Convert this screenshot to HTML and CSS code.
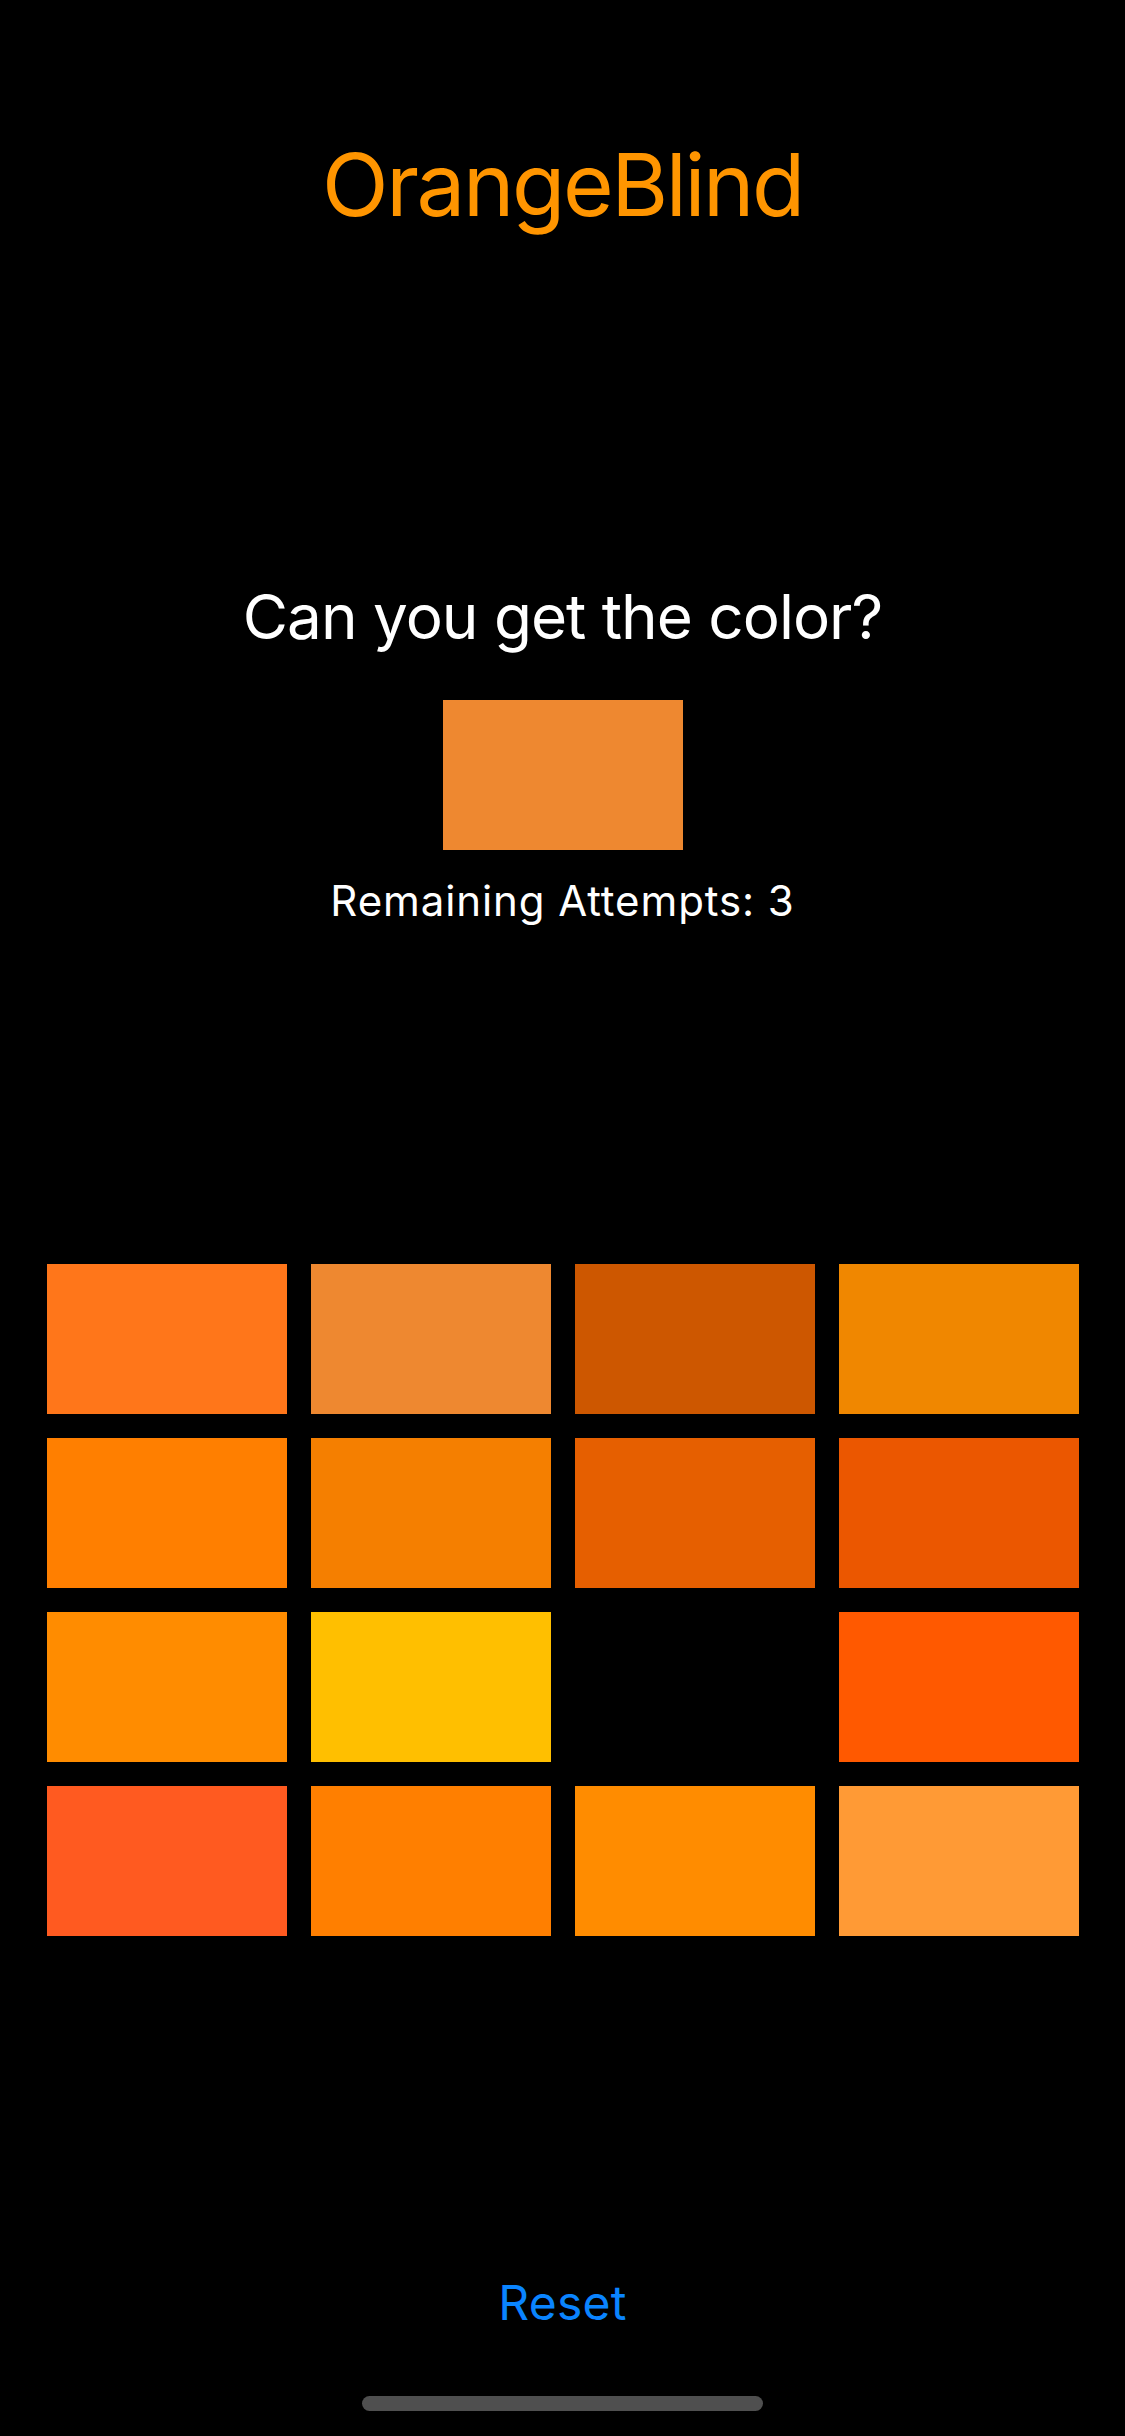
FILE: index.html
```html
<!DOCTYPE html>
<html lang="en">
<head>
<meta charset="utf-8">
<title>OrangeBlind</title>
<link rel="stylesheet" href="styles.css">
</head>
<body>
<main class="screen">
  <h1 class="title">OrangeBlind</h1>
  <p class="question">Can you get the color?</p>
  <div class="target"></div>
  <p class="attempts">Remaining Attempts: 3</p>
  <div class="grid">
    <div class="cell" style="background:#FF761A"></div>
    <div class="cell" style="background:#EE8830"></div>
    <div class="cell" style="background:#CD5700"></div>
    <div class="cell" style="background:#F08700"></div>
    <div class="cell" style="background:#FF7F00"></div>
    <div class="cell" style="background:#F57F00"></div>
    <div class="cell" style="background:#E65F00"></div>
    <div class="cell" style="background:#EB5700"></div>
    <div class="cell" style="background:#FF8C00"></div>
    <div class="cell" style="background:#FFBF00"></div>
    <div class="cell cell-empty"></div>
    <div class="cell" style="background:#FF5900"></div>
    <div class="cell" style="background:#FF5A20"></div>
    <div class="cell" style="background:#FF7F00"></div>
    <div class="cell" style="background:#FF8C00"></div>
    <div class="cell" style="background:#FF9A35"></div>
  </div>
  <button class="reset" type="button">Reset</button>
  <div class="home-indicator"></div>
</main>
</body>
</html>
```

FILE: styles.css
```css
html, body {
  margin: 0;
  padding: 0;
  background: #000;
}

body {
  font-family: Inter, "Noto Sans", "Liberation Sans", sans-serif;
  color: #fff;
}

.screen {
  width: 1125px;
  height: 2436px;
  display: flex;
  flex-direction: column;
  align-items: center;
  box-sizing: border-box;
  padding-top: 141px;
}

.title {
  margin: 0;
  font-size: 87px;
  line-height: 1;
  font-weight: 400;
  letter-spacing: -2.4px;
  color: #FF9500;
}

.question {
  margin: 358px 0 0;
  font-size: 62px;
  line-height: 1;
  font-weight: 400;
  letter-spacing: -1px;
}

.target {
  margin-top: 52px;
  width: 240px;
  height: 150px;
  background: #EE8830;
}

.attempts {
  margin: 30px 0 0;
  font-size: 42px;
  line-height: 1;
  letter-spacing: 0.9px;
}

.grid {
  margin-top: 342px;
  display: grid;
  grid-template-columns: repeat(4, 240px);
  grid-auto-rows: 150px;
  gap: 24px;
}

.cell-empty {
  background: transparent;
}

.reset {
  margin-top: 343px;
  padding: 0;
  border: 0;
  background: none;
  font-family: inherit;
  font-size: 48px;
  line-height: 1;
  letter-spacing: 0.3px;
  color: #0A84FF;
}

.home-indicator {
  margin-top: 69px;
  width: 401px;
  height: 15px;
  border-radius: 8px;
  background: #4F4F4F;
}
```
